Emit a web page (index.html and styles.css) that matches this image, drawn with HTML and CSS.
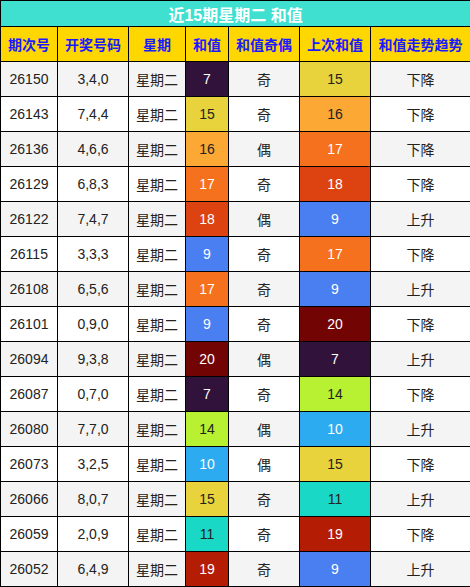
FILE: index.html
```html
<!DOCTYPE html>
<html>
<head>
<meta charset="utf-8">
<link rel="stylesheet" href="styles.css">
</head>
<body>
<table class="tbl">
<colgroup>
<col class="c1"><col class="c2"><col class="c3"><col class="c4"><col class="c5"><col class="c6"><col class="c7">
</colgroup>
<thead>
<tr><th colspan="7" class="title">近15期星期二 和值</th></tr>
<tr class="head"><th>期次号</th><th>开奖号码</th><th>星期</th><th>和值</th><th>和值奇偶</th><th>上次和值</th><th>和值走势趋势</th></tr>
</thead>
<tbody>
<tr class="odd"><td>26150</td><td>3,4,0</td><td>星期二</td><td class="v7">7</td><td>奇</td><td class="v15">15</td><td>下降</td></tr>
<tr><td>26143</td><td>7,4,4</td><td>星期二</td><td class="v15">15</td><td>奇</td><td class="v16">16</td><td>下降</td></tr>
<tr class="odd"><td>26136</td><td>4,6,6</td><td>星期二</td><td class="v16">16</td><td>偶</td><td class="v17">17</td><td>下降</td></tr>
<tr><td>26129</td><td>6,8,3</td><td>星期二</td><td class="v17">17</td><td>奇</td><td class="v18">18</td><td>下降</td></tr>
<tr class="odd"><td>26122</td><td>7,4,7</td><td>星期二</td><td class="v18">18</td><td>偶</td><td class="v9">9</td><td>上升</td></tr>
<tr><td>26115</td><td>3,3,3</td><td>星期二</td><td class="v9">9</td><td>奇</td><td class="v17">17</td><td>下降</td></tr>
<tr class="odd"><td>26108</td><td>6,5,6</td><td>星期二</td><td class="v17">17</td><td>奇</td><td class="v9">9</td><td>上升</td></tr>
<tr><td>26101</td><td>0,9,0</td><td>星期二</td><td class="v9">9</td><td>奇</td><td class="v20">20</td><td>下降</td></tr>
<tr class="odd"><td>26094</td><td>9,3,8</td><td>星期二</td><td class="v20">20</td><td>偶</td><td class="v7">7</td><td>上升</td></tr>
<tr><td>26087</td><td>0,7,0</td><td>星期二</td><td class="v7">7</td><td>奇</td><td class="v14">14</td><td>下降</td></tr>
<tr class="odd"><td>26080</td><td>7,7,0</td><td>星期二</td><td class="v14">14</td><td>偶</td><td class="v10">10</td><td>上升</td></tr>
<tr><td>26073</td><td>3,2,5</td><td>星期二</td><td class="v10">10</td><td>偶</td><td class="v15">15</td><td>下降</td></tr>
<tr class="odd"><td>26066</td><td>8,0,7</td><td>星期二</td><td class="v15">15</td><td>奇</td><td class="v11">11</td><td>上升</td></tr>
<tr><td>26059</td><td>2,0,9</td><td>星期二</td><td class="v11">11</td><td>奇</td><td class="v19">19</td><td>下降</td></tr>
<tr class="odd"><td>26052</td><td>6,4,9</td><td>星期二</td><td class="v19">19</td><td>奇</td><td class="v9">9</td><td>上升</td></tr>
</tbody>
</table>
</body>
</html>
```
FILE: styles.css
```css
html, body {
  margin: 0;
  padding: 0;
  background: #fff;
}
.tbl {
  width: 470px;
  border-collapse: collapse;
  table-layout: fixed;
  font-family: "Liberation Sans", Arial, "Noto Sans CJK SC", sans-serif;
  font-size: 14px;
  color: #222;
}
.c1 { width: 57px; }
.c2 { width: 71px; }
.c3 { width: 57px; }
.c4 { width: 43px; }
.c5 { width: 71px; }
.c6 { width: 71px; }
.c7 { width: 100px; }
.tbl th, .tbl td {
  border: 1px solid #000;
  text-align: center;
  padding: 0;
  overflow: hidden;
  white-space: nowrap;
}
.title {
  background: #40e0d0;
  color: #fff;
  font-size: 16px;
  font-weight: bold;
  height: 25px;
}
.head th {
  background: #ffd700;
  color: #1a1aff;
  font-weight: bold;
  font-size: 14px;
  height: 34px;
}
.tbl td {
  height: 34px;
  background: #fff;
}
.tbl tr.odd td {
  background: #f4f4f4;
}
.tbl tr td.v7 { background: #31123b; color: #fff; }
.tbl tr td.v9 { background: #4a7ff2; color: #fff; }
.tbl tr td.v10 { background: #2cabf0; color: #fff; }
.tbl tr td.v11 { background: #1ad8c6; color: #222; }
.tbl tr td.v14 { background: #b8f132; color: #222; }
.tbl tr td.v15 { background: #e8d33c; color: #222; }
.tbl tr td.v16 { background: #fba834; color: #222; }
.tbl tr td.v17 { background: #f6711d; color: #fff; }
.tbl tr td.v18 { background: #dd4310; color: #fff; }
.tbl tr td.v19 { background: #b41d04; color: #fff; }
.tbl tr td.v20 { background: #720404; color: #fff; }
```
